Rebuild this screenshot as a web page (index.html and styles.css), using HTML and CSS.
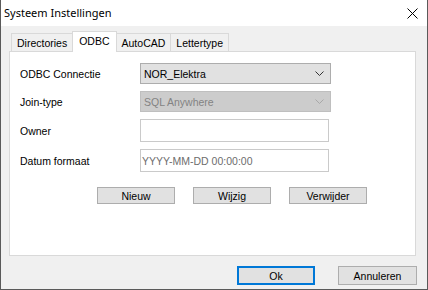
FILE: index.html
```html
<!DOCTYPE html>
<html lang="nl">
<head>
    <meta charset="UTF-8">
    <title>Systeem Instellingen</title>
    <link rel="stylesheet" href="styles.css">
</head>
<body>
    <div class="window">
        <div class="titlebar">
            <div class="title">Systeem Instellingen</div>
            <svg class="close" width="11" height="11" viewBox="0 0 11 11">
                <path d="M0.5 0.5 L10.5 10.5 M10.5 0.5 L0.5 10.5" stroke="#000" stroke-width="1" fill="none"/>
            </svg>
        </div>

        <div class="content">
            <div class="tabs">
                <div class="tab">Directories</div>
                <div class="tab active">ODBC</div>
                <div class="tab">AutoCAD</div>
                <div class="tab">Lettertype</div>
            </div>

            <div class="panel">
                <div class="form">
                    <label>ODBC Connectie</label>
                    <div class="combo">
                        <span>NOR_Elektra</span>
                        <svg width="9" height="5" viewBox="0 0 9 5"><path d="M0.5 0.5 L4.5 4.5 L8.5 0.5" stroke="#333" fill="none"/></svg>
                    </div>

                    <label>Join-type</label>
                    <div class="combo disabled">
                        <span>SQL Anywhere</span>
                        <svg width="9" height="5" viewBox="0 0 9 5"><path d="M0.5 0.5 L4.5 4.5 L8.5 0.5" stroke="#a8a8a8" fill="none"/></svg>
                    </div>

                    <label>Owner</label>
                    <div class="textbox"></div>

                    <label>Datum formaat</label>
                    <div class="textbox hint">YYYY-MM-DD 00:00:00</div>
                </div>

                <div class="actions">
                    <div class="btn">Nieuw</div>
                    <div class="btn">Wijzig</div>
                    <div class="btn">Verwijder</div>
                </div>
            </div>

            <div class="footer">
                <div class="btn default">Ok</div>
                <div class="btn">Annuleren</div>
            </div>
        </div>
    </div>
</body>
</html>
```

FILE: styles.css
```css
body {
    margin: 0;
    background-color: #ffffff;
}

.window {
    width: 428px;
    height: 290px;
    box-sizing: border-box;
    border: 1px solid #5a5a5a;
    border-top: none;
    background-color: #f0f0f0;
    display: flex;
    flex-direction: column;
    font-family: "Liberation Sans", Arial, sans-serif;
    font-size: 10.5px;
    color: #000000;
}

.titlebar {
    height: 26px;
    background-color: #ffffff;
    display: flex;
    align-items: center;
    justify-content: space-between;
    padding: 0 9px 0 3px;
}

.title {
    font-family: "Noto Sans", sans-serif;
    font-size: 11px;
    padding-bottom: 1px;
}

.close {
    margin-top: 1px;
}

.content {
    flex: 1;
    display: flex;
    flex-direction: column;
    padding: 5px 11px 4px 8px;
}

/* tab strip */
.tabs {
    display: flex;
    align-items: flex-end;
    padding-left: 2px;
    height: 20px;
    position: relative;
    z-index: 1;
}

.tab {
    height: 18px;
    box-sizing: border-box;
    border: 1px solid #d9d9d9;
    border-bottom: none;
    background-color: #f0f0f0;
    padding: 0 5px;
    display: flex;
    align-items: center;
    margin-right: -1px;
}

.tab.active {
    height: 21px;
    margin-bottom: -1px;
    background-color: #ffffff;
    padding: 0 6px 2px 6px;
}

/* tab page */
.panel {
    height: 205px;
    box-sizing: border-box;
    border: 1px solid #d9d9d9;
    background-color: #ffffff;
    padding: 11px 10px 0 10px;
}

.form {
    display: grid;
    grid-template-columns: 120px 191px;
    grid-template-rows: 21px 21px 23px 23px;
    row-gap: 7px;
}

.form label {
    display: flex;
    align-items: center;
}

.combo {
    box-sizing: border-box;
    border: 1px solid #adadad;
    background-color: #e1e1e1;
    display: flex;
    align-items: center;
    justify-content: space-between;
    padding: 0 6px 0 3px;
}

.combo.disabled {
    border-color: #bfbfbf;
    background-color: #cccccc;
    color: #838383;
}

.textbox {
    width: 189px;
    box-sizing: border-box;
    border: 1px solid #cacaca;
    background-color: #ffffff;
    display: flex;
    align-items: center;
    padding-left: 1px;
}

.textbox.hint {
    color: #6d6d6d;
}

.actions {
    display: flex;
    gap: 18px;
    margin: 15px 0 0 77px;
}

.btn {
    width: 78px;
    height: 17px;
    box-sizing: border-box;
    border: 1px solid #adadad;
    background-color: #e1e1e1;
    display: flex;
    align-items: center;
    justify-content: center;
}

.footer {
    display: flex;
    justify-content: flex-end;
    gap: 23px;
    margin: 10px -1px 0 0;
}

.footer .btn {
    height: 19px;
}

.footer .btn:last-child {
    width: 79px;
}

.btn.default {
    border: 2px solid #0078d7;
}
```
